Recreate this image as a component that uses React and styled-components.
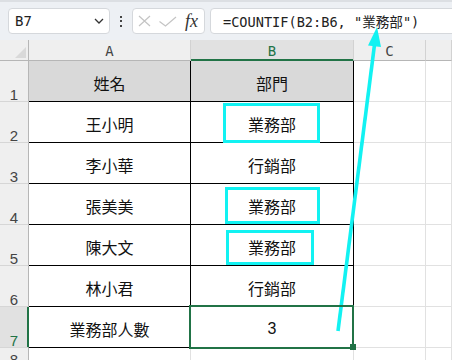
import React from "react";
import styled, { createGlobalStyle } from "styled-components";

const GREEN = "#217346";
const CYAN = "#12f2f2";

const GlobalStyle = createGlobalStyle`
  html, body { margin: 0; padding: 0; background: #fff; overflow: hidden; }
  body { font-family: "Noto Sans CJK TC", "Noto Sans", sans-serif; }
`;

const Page = styled.div`
  position: relative;
  width: 452px;
  height: 360px;
  overflow: hidden;
  background: #fff;
`;

/* ---------- formula bar ---------- */

const FormulaBar = styled.div`
  display: flex;
  align-items: flex-start;
  height: 40px;
  box-sizing: border-box;
  padding: 6px 0 0 8px;
  border-top: 2px solid #dcdfe3;
  background: #edf0f4;
`;

const Box = styled.div`
  box-sizing: border-box;
  height: 26px;
  flex-shrink: 0;
  display: flex;
  align-items: center;
  background: #fff;
  border: 1px solid #d5d8dc;
  border-radius: 4px;
`;

const NameBox = styled(Box)`
  width: 102px;
  padding: 0 5px 0 6px;
  justify-content: space-between;
  font: 14px "DejaVu Sans Mono", monospace;
  color: #222;
`;

const Kebab = styled.div`
  width: 22px;
  height: 26px;
  flex-shrink: 0;
  display: flex;
  flex-direction: column;
  align-items: center;
  justify-content: center;
  gap: 2.5px;
  > span {
    width: 2px;
    height: 2px;
    background: #444;
  }
`;

const FxBox = styled(Box)`
  width: 73px;
  padding-left: 5px;
  gap: 8px;
`;

const Fx = styled.span`
  font: italic 18px "Liberation Serif", serif;
  color: #333;
  line-height: 1;
`;

const FormulaInput = styled(Box)`
  width: 300px;
  margin-left: 5px;
  padding-left: 12px;
  font: 13.6px "DejaVu Sans Mono", "Noto Sans CJK TC", monospace;
  color: #222;
  white-space: pre;
`;

/* ---------- sheet ---------- */

const Sheet = styled.div`
  display: grid;
  grid-template-columns: 29px 162px 163px 72px 1fr;
  grid-template-rows: 21px repeat(7, 41px) 19px 21px;
`;

const Corner = styled.div`
  position: relative;
  background: #efefef;
  border-right: 1px solid #b6b6b6;
  border-bottom: 1px solid #b6b6b6;
  &::after {
    content: "";
    position: absolute;
    right: 2px;
    bottom: 2px;
    width: 11px;
    height: 11px;
    background: #d9d9d9;
    clip-path: polygon(100% 0, 100% 100%, 0 100%);
  }
`;

const ColHeader = styled.div`
  display: flex;
  justify-content: center;
  align-items: center;
  padding-top: 2px;
  background: ${(p) => (p.$active ? "#e1e1e1" : "#efefef")};
  border-right: 1px solid #d2d2d2;
  border-bottom: 1px solid ${(p) => (p.$active ? GREEN : "#b6b6b6")};
  box-shadow: ${(p) => (p.$active ? `inset 0 -1px 0 ${GREEN}` : "none")};
  color: ${(p) => (p.$active ? GREEN : "#444")};
  font: 14px "DejaVu Sans Mono", monospace;
`;

const RowHeader = styled.div`
  display: flex;
  justify-content: center;
  align-items: flex-end;
  background: ${(p) => (p.$active ? "#e1e1e1" : "#efefef")};
  border-right: 1px solid ${(p) => (p.$active ? GREEN : "#b6b6b6")};
  border-bottom: 1px solid #d6d6d6;
  box-shadow: ${(p) => (p.$active ? `inset -1px 0 0 ${GREEN}` : "none")};
  color: ${(p) => (p.$active ? GREEN : "#444")};
  font: 15px/12px "Liberation Sans", sans-serif;
`;

const Cell = styled.div`
  position: relative;
  display: flex;
  justify-content: center;
  align-items: center;
  padding-top: 4px;
  box-sizing: border-box;
  background: ${(p) => (p.$head ? "#d9d9d9" : "#fff")};
  border-right: 1px solid #000;
  border-bottom: 1px solid #000;
  font: 16px "Liberation Sans", "Noto Sans CJK TC", sans-serif;
  color: #111;
`;

const EmptyCell = styled.div`
  background: #fff;
  border-right: 1px solid #e1e1e1;
  border-bottom: 1px solid #e1e1e1;
`;

const Highlight = styled.div`
  position: absolute;
  z-index: 1;
  left: ${(p) => p.$l}px;
  top: ${(p) => p.$t}px;
  width: ${(p) => p.$w}px;
  height: ${(p) => p.$h}px;
  box-sizing: border-box;
  border: 3px solid ${CYAN};
`;

const Selection = styled.div`
  position: absolute;
  z-index: 1;
  top: -2px;
  left: -2px;
  right: -1px;
  bottom: -2px;
  border: 2px solid ${GREEN};
`;

const Handle = styled.div`
  position: absolute;
  z-index: 2;
  right: -3px;
  bottom: -3px;
  width: 6px;
  height: 6px;
  background: ${GREEN};
`;

const Overlay = styled.svg`
  position: absolute;
  left: 0;
  top: 0;
  pointer-events: none;
`;

const rows = [
  { n: 1, a: "姓名", b: "部門", head: true },
  { n: 2, a: "王小明", b: "業務部", hl: { l: 32, t: 1, w: 97, h: 40 } },
  { n: 3, a: "李小華", b: "行銷部" },
  { n: 4, a: "張美美", b: "業務部", hl: { l: 34, t: 3, w: 95, h: 37 } },
  { n: 5, a: "陳大文", b: "業務部", hl: { l: 35, t: 5, w: 88, h: 35 } },
  { n: 6, a: "林小君", b: "行銷部" },
  { n: 7, a: "業務部人數", b: "3", sel: true },
];

export default function App() {
  return (
    <Page>
      <GlobalStyle />
      <FormulaBar>
        <NameBox>
          <span>B7</span>
          <svg width="10" height="6" viewBox="0 0 10 6">
            <path d="M1 1 L5 5 L9 1" fill="none" stroke="#333" strokeWidth="1.3" />
          </svg>
        </NameBox>
        <Kebab>
          <span />
          <span />
          <span />
        </Kebab>
        <FxBox>
          <svg width="13" height="12" viewBox="0 0 13 12">
            <path d="M1 1 L12 11 M12 1 L1 11" stroke="#c4c4c4" strokeWidth="1.2" />
          </svg>
          <svg width="18" height="11" viewBox="0 0 18 11">
            <path d="M0.5 5.5 L6.5 10 L17 1" fill="none" stroke="#c4c4c4" strokeWidth="1.2" />
          </svg>
          <Fx>fx</Fx>
        </FxBox>
        <FormulaInput>{'=COUNTIF(B2:B6, "業務部")'}</FormulaInput>
      </FormulaBar>

      <Sheet>
        <Corner />
        <ColHeader>A</ColHeader>
        <ColHeader $active>B</ColHeader>
        <ColHeader>C</ColHeader>
        <ColHeader />

        {rows.map((r) => (
          <React.Fragment key={r.n}>
            <RowHeader $active={r.sel}>{r.n}</RowHeader>
            <Cell $head={r.head}>{r.a}</Cell>
            <Cell $head={r.head}>
              {r.b}
              {r.hl && <Highlight $l={r.hl.l} $t={r.hl.t} $w={r.hl.w} $h={r.hl.h} />}
              {r.sel && (
                <>
                  <Selection />
                  <Handle />
                </>
              )}
            </Cell>
            <EmptyCell />
            <EmptyCell />
          </React.Fragment>
        ))}

        <RowHeader>8</RowHeader>
        <EmptyCell />
        <EmptyCell />
        <EmptyCell />
        <EmptyCell />
      </Sheet>

      <Overlay width="452" height="360" viewBox="0 0 452 360">
        <line x1="338" y1="331" x2="374.6" y2="44" stroke={CYAN} strokeWidth="3.6" />
        <polygon points="377,27 368,45.5 381,47" fill={CYAN} />
      </Overlay>
    </Page>
  );
}
